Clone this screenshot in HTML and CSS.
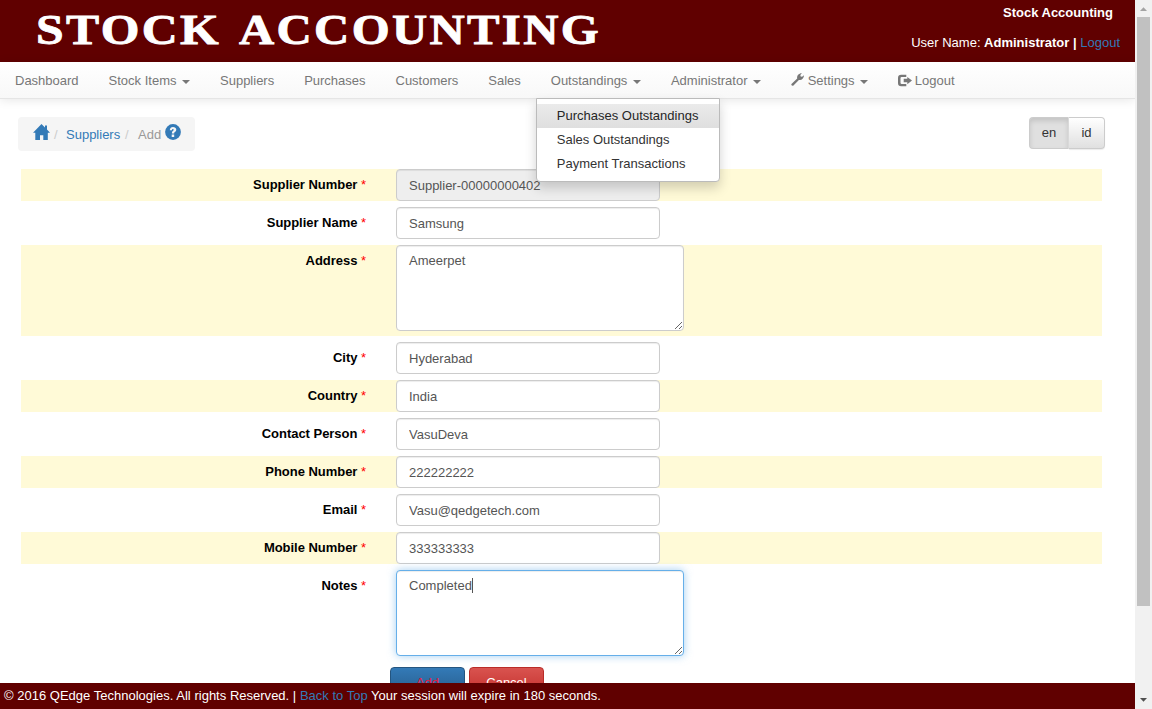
FILE: index.html
```html
<!DOCTYPE html>
<html lang="en">
<head>
<meta charset="utf-8">
<title>Stock Accounting</title>
<link rel="stylesheet" href="styles.css">
</head>
<body>
<div class="window">
<div class="page">
  <header class="header">
    <svg class="brand" width="601" height="62" viewBox="0 0 601 62">
      <text class="brand-text" x="36" y="44" textLength="185" lengthAdjust="spacingAndGlyphs">STOCK</text>
      <text class="brand-text" x="239" y="44" textLength="362" lengthAdjust="spacingAndGlyphs">ACCOUNTING</text>
    </svg>
    <div class="user">
      <div class="company">Stock Accounting</div>
      <div>User Name: <b>Administrator</b> <b class="bar">|</b> <a>Logout</a></div>
    </div>
  </header>
  <nav class="nav">
    <div class="item">Dashboard</div>
    <div class="item">Stock Items<i class="caret"></i></div>
    <div class="item">Suppliers</div>
    <div class="item">Purchases</div>
    <div class="item">Customers</div>
    <div class="item">Sales</div>
    <div class="item">Outstandings<i class="caret"></i>
      <div class="menu">
        <div class="menu-item hover">Purchases Outstandings</div>
        <div class="menu-item">Sales Outstandings</div>
        <div class="menu-item">Payment Transactions</div>
      </div>
    </div>
    <div class="item">Administrator<i class="caret"></i></div>
    <div class="item"><svg class="wrench" width="13" height="13" viewBox="0 0 13 13"><path d="M.2 11.300 6.200 5.500C5.600 2.600 7.900.1 10.900.2L9.300 2.100l.4 1.400 1.400.3L12.900 2.200C13 5.300 10.600 7.300 7.900 7.100L2.200 12.800Q.500 13 .2 11.300z"/></svg> Settings<i class="caret"></i></div>
    <div class="item"><svg class="exit" width="14" height="13" viewBox="0 0 14 13"><path d="M8.300.8H3.200Q0 .8 0 4v5q0 3.200 3.200 3.200h5.100V9.900H3.700Q2.500 9.900 2.500 8.700V4.300Q2.500 3.100 3.700 3.100h4.600z"/><path d="M9.300 2.900 14 6.500 9.300 10.200V8.300H5.700V4.700h3.600z"/></svg> Logout</div>
  </nav>
  <main class="content">
    <div class="toolbar">
      <div class="crumbs">
        <svg class="home" width="17" height="16" viewBox="0 0 17 16"><path d="M8.500 0 12 3.400V1.500h2v3.900L17 8.800H14.800V16H10.300V11.200H7V16H2.300V8.800H0z"/></svg><span class="sep">/</span><a class="crumb">Suppliers</a><span class="sep second">/</span><span class="active">Add</span>
        <svg class="help" width="16" height="16" viewBox="0 0 16 16"><circle cx="8" cy="8" r="7.900"/><path class="q" d="M4.800 6.300C4.800 4 6.300 2.900 8 2.900s3.300 1 3.300 2.800c0 1.900-2.100 2-2.100 3.400v.3H6.900v-.6c0-1.900 1.800-2 1.800-3.100 0-.5-.3-.7-.8-.7-.6 0-.9.400-.9 1.300zM6.700 10.600h2.500V12.900H6.700z"/></svg>
      </div>
      <div class="langs"><span class="lang on">en</span><span class="lang">id</span></div>
    </div>
    <form class="form">
      <div class="row odd"><label>Supplier Number <em>*</em></label><input class="field" readonly value="Supplier-00000000402"></div>
      <div class="row"><label>Supplier Name <em>*</em></label><input class="field" value="Samsung"></div>
      <div class="row odd tall"><label>Address <em>*</em></label><textarea class="field area">Ameerpet</textarea></div>
      <div class="row"><label>City <em>*</em></label><input class="field" value="Hyderabad"></div>
      <div class="row odd"><label>Country <em>*</em></label><input class="field" value="India"></div>
      <div class="row"><label>Contact Person <em>*</em></label><input class="field" value="VasuDeva"></div>
      <div class="row odd"><label>Phone Number <em>*</em></label><input class="field" value="222222222"></div>
      <div class="row"><label>Email <em>*</em></label><input class="field" value="Vasu@qedgetech.com"></div>
      <div class="row odd"><label>Mobile Number <em>*</em></label><input class="field" value="333333333"></div>
      <div class="row tall"><label>Notes <em>*</em></label><div class="focus-wrap"><textarea class="field area focused">Completed</textarea><i class="cursor"></i></div></div>
      <div class="actions"><span class="btn add">Add</span><span class="btn cancel">Cancel</span></div>
    </form>
  </main>
  <footer class="footer">© 2016 QEdge Technologies. All rights Reserved. | <a>Back to Top</a> Your session will expire in 180 seconds.</footer>
</div>
<div class="scrollbar">
  <svg class="arrow up" width="17" height="17" viewBox="0 0 17 17"><path d="M5 11 8.500 7.200 12 11z"/></svg>
  <div class="thumb"></div>
  <svg class="arrow down" width="17" height="17" viewBox="0 0 17 17"><path d="M5 6h7L8.500 9.800z"/></svg>
</div>
</div>
</body>
</html>
```
FILE: styles.css
```css
* { box-sizing: border-box; }
body {
  margin: 0;
  font: 13px/20px "Liberation Sans", Arial, sans-serif;
  color: #000;
  background: #fff;
}
a { color: #337ab7; }
.window { display: flex; height: 709px; overflow: hidden; }
.page { position: relative; width: 1135px; height: 709px; overflow: hidden; }

.header { display: flex; justify-content: space-between; height: 62px; background: #600000; color: #fff; }
.brand { display: block; }
.brand-text { font: bold 42px "Liberation Serif", serif; letter-spacing: 2px; fill: #fff; stroke: #fff; stroke-width: .8px; }
.user { padding: 3px 15px 0 0; text-align: right; }
.company { font-weight: bold; padding-right: 7px; margin-bottom: 10px; }

.nav {
  display: flex;
  height: 37px;
  border-bottom: 1px solid #e5e5e5;
  background: linear-gradient(#fff, #f8f8f8);
  box-shadow: 0 1px 10px rgba(0, 0, 0, .1);
  position: relative;
  z-index: 2;
}
.item { position: relative; padding: 9px 14.950px 7px 15px; color: #777; white-space: nowrap; }
.caret {
  display: inline-block;
  margin-left: 5.600px;
  vertical-align: middle;
  border: 4px solid transparent;
  border-top-color: #777;
  border-bottom: 0;
}
.wrench { fill: #777; vertical-align: -1px; }
.exit { fill: #777; vertical-align: -2px; margin-right: -1px; }
.menu {
  position: absolute;
  left: 0;
  top: 36px;
  width: 184px;
  height: 84px;
  padding: 5px 0;
  background: #fff;
  border: 1px solid #bbb;
  border-radius: 0 0 4px 4px;
  box-shadow: 0 6px 12px rgba(0, 0, 0, .175);
}
.menu-item { height: 24px; padding: 2px 20px; color: #333; }
.menu-item.hover { background: linear-gradient(#ebebeb, #dfdfdf); color: #262626; }

.content { padding: 18px 30px 0 18px; }
.toolbar { display: flex; justify-content: space-between; height: 52px; }
.crumbs { display: flex; width: 177px; height: 34px; padding: 7px 14px 0 15px; background: #f5f5f5; border-radius: 4px; }
.home, .help { fill: #337ab7; flex: none; }
.sep { flex: none; color: #ccc; width: 16px; padding-left: 4px; }
.sep.second { padding-left: 5px; }
.help { margin-left: 4px; }
.q { fill: #f5f5f5; }
.sep, .crumb, .active { line-height: 21px; }
.active { color: #999; margin-left: 2px; }
.crumb { width: 54px; }
.langs { display: flex; height: 32px; }
.lang {
  width: 36px;
  padding-top: 5px;
  text-align: center;
  color: #333;
  background: linear-gradient(#fff, #e0e0e0);
  border: 1px solid #ccc;
  border-left: 0;
  border-radius: 0 4px 4px 0;
  box-shadow: 0 1px 1px rgba(0, 0, 0, .08);
}
.lang.on {
  width: 40px;
  background: #e0e0e0;
  border: 1px solid #ccc;
  border-right-color: #dbdbdb;
  border-radius: 4px 0 0 4px;
  box-shadow: inset 0 3px 5px rgba(0, 0, 0, .125);
}

.form { margin-left: 3px; width: 1081px; }
.row { display: flex; height: 32px; margin-bottom: 6px; }
.row.tall { height: 91px; }
.odd { background: #fffad7; }
label { width: 375px; padding: 6px 30px 0 0; text-align: right; font-weight: bold; letter-spacing: -.030px; }
em { font-style: normal; font-weight: normal; color: #f00; }
.field {
  display: block;
  width: 264px;
  height: 32px;
  margin: 0;
  padding: 5px 12px;
  border: 1px solid #ccc;
  border-radius: 4px;
  background: #fff;
  box-shadow: inset 0 1px 1px rgba(0, 0, 0, .075);
  font: 13px/20px "Liberation Sans", Arial, sans-serif;
  color: #555;
  outline: 0;
}
.field[readonly] { background: #eee; }
.area { width: 288px; height: 86px; resize: both; }
.area.focused { border-color: #66afe9; box-shadow: inset 0 1px 1px rgba(0, 0, 0, .075), 0 0 8px rgba(102, 175, 233, .6); }
.focus-wrap { position: relative; }
.cursor { position: absolute; left: 76px; top: 8px; width: 1px; height: 15px; background: #555; }
.actions { display: flex; gap: 4px; padding-left: 369px; }
.btn { width: 75px; height: 32px; padding-top: 5px; text-align: center; border: 1px solid; border-radius: 4px; }
.add { color: #f0143c; background: linear-gradient(#337ab7, #265a88); border-color: #245580; }
.cancel { color: #fff; background: linear-gradient(#d9534f, #c12e2a); border-color: #b92c28; }

.footer { position: absolute; left: 0; bottom: 0; z-index: 3; width: 100%; height: 26px; padding: 3px 4px; letter-spacing: .012px; background: #600000; color: #fff; }

.scrollbar { display: flex; flex-direction: column; width: 17px; height: 709px; background: #f1f1f1; }
.thumb { width: 13px; height: 589px; margin-left: 2px; background: #c1c1c1; }
.arrow { display: block; flex: none; fill: #505050; }
.up { fill: #a3a3a3; }
.down { margin-top: auto; }
```
